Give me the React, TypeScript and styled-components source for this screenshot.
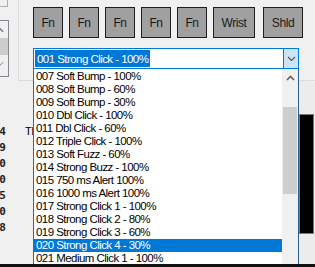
import React from 'react';
import styled, { createGlobalStyle } from 'styled-components';

const GlobalStyle = createGlobalStyle`
  html, body {
    margin: 0;
    padding: 0;
    background: #f0f0f0;
  }
  * { box-sizing: border-box; }
`;

const Page = styled.div`
  position: relative;
  width: 315px;
  height: 267px;
  overflow: hidden;
  display: flex;
  flex-direction: column;
  background: #f0f0f0;
  font-family: "Liberation Sans", Arial, sans-serif;
  font-size: 11px;
  letter-spacing: -0.15px;
  color: #000;
`;

const Body = styled.div`
  flex: 1;
  display: flex;
  min-height: 0;
`;

const LeftCol = styled.div`
  width: 18px;
  display: flex;
  flex-direction: column;
`;

const CornerBox = styled.div`
  width: 8px;
  height: 7px;
  border-right: 1px solid #adadad;
  border-bottom: 1px solid #adadad;
`;

const SideList = styled.div`
  margin-top: 13px;
  width: 9px;
  height: 57px;
  border: 1px solid #828790;
  border-left: none;
  background: #f0f0f0;
  display: flex;
  flex-direction: column;
  align-items: flex-start;
  overflow: hidden;
`;

const SideArrow = styled.div`
  height: 17px;
  width: 8px;
  display: flex;
  align-items: center;
  margin-left: -4px;
`;

const SideThumb = styled.div`
  height: 17px;
  width: 8px;
  background: #cdcdcd;
`;

const Numbers = styled.div`
  margin-top: 47px;
  width: 6px;
  overflow: hidden;
  display: flex;
  flex-direction: column;
  align-items: flex-end;
  font-family: "DejaVu Sans Mono", "Liberation Mono", monospace;
  font-size: 11px;
  font-weight: bold;
  letter-spacing: 0;
  line-height: 16px;
  white-space: nowrap;
  color: #222;
`;

const Main = styled.div`
  flex: 1;
  display: flex;
  flex-direction: column;
`;

const GroupBox = styled.div`
  height: 81px;
  border-left: 1px solid #dcdcdc;
  border-bottom: 1px solid #dcdcdc;
  padding: 7px 0 0 14px;
  display: flex;
  flex-direction: column;
`;

const ButtonRow = styled.div`
  display: flex;
  gap: 6px;
`;

const KeyButton = styled.div<{ $w: number; $extra?: number }>`
  width: ${p => p.$w}px;
  height: 31px;
  margin-left: ${p => p.$extra || 0}px;
  background: #a0a0a0;
  border: 1px solid #1e1e1e;
  display: flex;
  align-items: center;
  justify-content: center;
  font-size: 12px;
  letter-spacing: -0.4px;
  color: #1a1a1a;
`;

const Combo = styled.div`
  margin-top: 10px;
  width: 266px;
  height: 21px;
  border: 1px solid #0078d7;
  background: #fff;
  display: flex;
  align-items: stretch;
`;

const ComboText = styled.div`
  flex: 1;
  padding: 1px 0 1px 1px;
  display: flex;
`;

const Selected = styled.span`
  background: #0078d7;
  color: #fff;
  padding: 0 2px 0 2px;
  display: flex;
  align-items: center;
  font-size: 11.5px;
  letter-spacing: -0.55px;
`;

const ComboArrow = styled.div`
  width: 15px;
  background: #cce4f7;
  border-left: 1px solid #0078d7;
  display: flex;
  align-items: center;
  justify-content: center;
`;

const Lower = styled.div`
  flex: 1;
  display: flex;
`;

const LabelCol = styled.div`
  flex: 1;
  padding: 44px 0 0 7px;
  font-size: 11px;
`;

const SideCol = styled.div`
  width: 17px;
  padding-top: 33px;
  border-left: 1px solid #e0e0e0;
  background: #ececec;
`;

const BlackPanel = styled.div`
  width: 15px;
  height: 120px;
  background: #000;
  border: 1px solid #7a7a7a;
`;

const BottomBar = styled.div`
  height: 3px;
  background: #111;
  position: relative;
  z-index: 3;
`;

const DropList = styled.div`
  position: absolute;
  left: 33px;
  top: 69px;
  width: 266px;
  height: 196px;
  background: #fff;
  border-left: 1px solid #0078d7;
  border-right: 1px solid #2b5f8f;
  display: flex;
  z-index: 2;
  overflow: hidden;
`;

const Items = styled.div`
  flex: 1;
  padding-top: 1px;
`;

const Item = styled.div<{ $active?: boolean }>`
  height: 13px;
  line-height: 13px;
  padding-left: 2px;
  font-size: 11.5px;
  letter-spacing: -0.55px;
  white-space: nowrap;
  background: ${p => (p.$active ? '#0078d7' : 'transparent')};
  color: ${p => (p.$active ? '#fff' : '#000')};
`;

const ScrollBar = styled.div`
  width: 16px;
  background: #f0f0f0;
  display: flex;
  flex-direction: column;
  align-items: center;
`;

const ScrollArrow = styled.div`
  height: 17px;
  display: flex;
  align-items: center;
  justify-content: center;
`;

const ScrollThumb = styled.div`
  margin-top: 21px;
  width: 14px;
  height: 87px;
  background: #cdcdcd;
`;

const Up = ({ color = '#606060' }: { color?: string }) => (
  <svg width="9" height="6" viewBox="0 0 9 6">
    <path d="M1 5 L4.5 1.5 L8 5" fill="none" stroke={color} strokeWidth="1.6" />
  </svg>
);

const Down = ({ color = '#555' }: { color?: string }) => (
  <svg width="9" height="6" viewBox="0 0 9 6">
    <path d="M1 1 L4.5 4.5 L8 1" fill="none" stroke={color} strokeWidth="1.1" />
  </svg>
);

const effects = [
  '007 Soft Bump - 100%',
  '008 Soft Bump - 60%',
  '009 Soft Bump - 30%',
  '010 Dbl Click - 100%',
  '011 Dbl Click - 60%',
  '012 Triple Click - 100%',
  '013 Soft Fuzz - 60%',
  '014 Strong Buzz - 100%',
  '015 750 ms Alert 100%',
  '016 1000 ms Alert 100%',
  '017 Strong Click 1 - 100%',
  '018 Strong Click 2 - 80%',
  '019 Strong Click 3 - 60%',
  '020 Strong Click 4 - 30%',
  '021 Medium Click 1 - 100%',
];

const values = ['1024', '2049', '4000', '3000', '1005', '2000', '1998'];

const buttons = [
  { label: 'Fn', w: 30 },
  { label: 'Fn', w: 30 },
  { label: 'Fn', w: 30 },
  { label: 'Fn', w: 30 },
  { label: 'Fn', w: 30 },
  { label: 'Wrist', w: 42 },
  { label: 'Shld', w: 40, extra: 2 },
];

export default function App() {
  return (
    <Page>
      <GlobalStyle />
      <Body>
        <LeftCol>
          <CornerBox />
          <SideList>
            <SideArrow><Up color="#777" /></SideArrow>
            <SideThumb />
            <SideArrow><Down color="#777" /></SideArrow>
          </SideList>
          <Numbers>
            {values.map((v, i) => (
              <div key={i}>{v}</div>
            ))}
          </Numbers>
        </LeftCol>
        <Main>
          <GroupBox>
            <ButtonRow>
              {buttons.map((b, i) => (
                <KeyButton key={i} $w={b.w} $extra={b.extra}>{b.label}</KeyButton>
              ))}
            </ButtonRow>
            <Combo>
              <ComboText>
                <Selected>001 Strong Click - 100%</Selected>
              </ComboText>
              <ComboArrow><Down /></ComboArrow>
            </Combo>
          </GroupBox>
          <Lower>
            <LabelCol>Threshold</LabelCol>
            <SideCol>
              <BlackPanel />
            </SideCol>
          </Lower>
        </Main>
      </Body>
      <BottomBar />
      <DropList>
        <Items>
          {effects.map(e => (
            <Item key={e} $active={e.startsWith('020')}>{e}</Item>
          ))}
        </Items>
        <ScrollBar>
          <ScrollArrow><Up /></ScrollArrow>
          <ScrollThumb />
        </ScrollBar>
      </DropList>
    </Page>
  );
}
